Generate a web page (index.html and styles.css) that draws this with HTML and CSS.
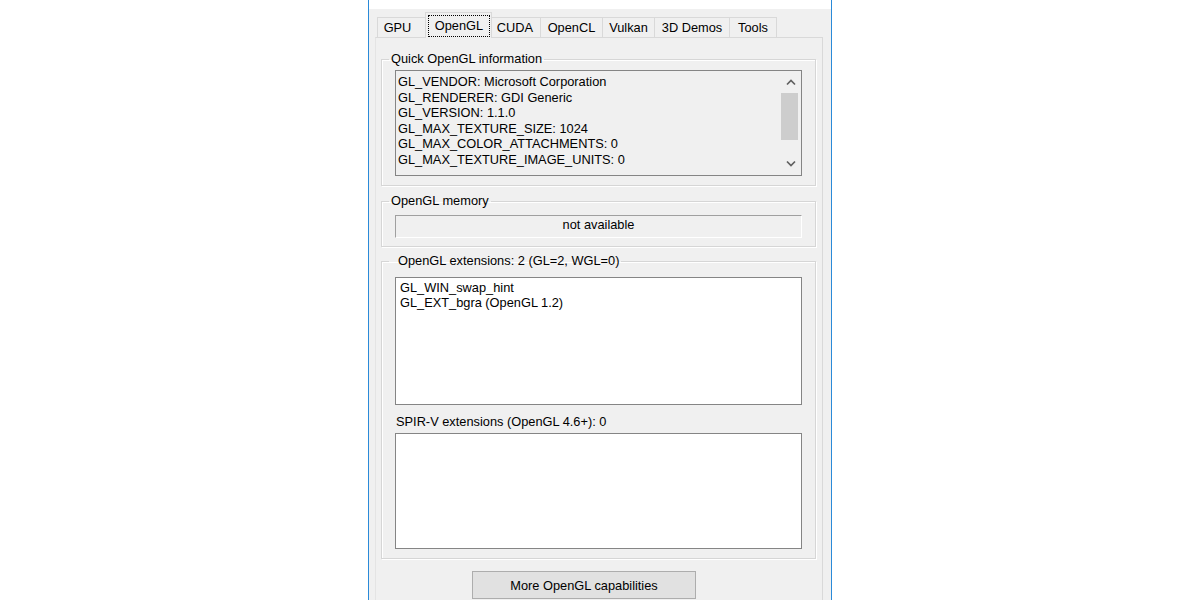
FILE: index.html
```html
<!DOCTYPE html>
<html>
<head>
<meta charset="utf-8">
<title>OpenGL</title>
<link rel="stylesheet" href="styles.css">
</head>
<body>
<div class="window">
  <div class="titlebar"></div>
  <div class="client">
    <div class="tabs">
      <div class="tab tab-gpu">GPU</div>
      <div class="tab tab-opengl active"><span class="focus">OpenGL</span></div>
      <div class="tab tab-cuda">CUDA</div>
      <div class="tab tab-opencl">OpenCL</div>
      <div class="tab tab-vulkan">Vulkan</div>
      <div class="tab tab-demos">3D Demos</div>
      <div class="tab tab-tools">Tools</div>
    </div>
    <div class="panel">
      <fieldset class="group group-quick">
        <legend>Quick OpenGL information</legend>
        <div class="group-body body-quick">
          <div class="listbox list-info">
            <div class="lines lines-info">
              <div>GL_VENDOR: Microsoft Corporation</div>
              <div>GL_RENDERER: GDI Generic</div>
              <div>GL_VERSION: 1.1.0</div>
              <div>GL_MAX_TEXTURE_SIZE: 1024</div>
              <div>GL_MAX_COLOR_ATTACHMENTS: 0</div>
              <div>GL_MAX_TEXTURE_IMAGE_UNITS: 0</div>
            </div>
            <div class="scrollbar">
              <div class="sb-btn"><svg width="12" height="8" viewBox="0 0 12 8"><polyline points="2,6.5 6,2.5 10,6.5" fill="none" stroke="#606060" stroke-width="1.7"/></svg></div>
              <div class="sb-track"><div class="sb-thumb"></div></div>
              <div class="sb-btn"><svg width="12" height="8" viewBox="0 0 12 8"><polyline points="2,1.5 6,5.5 10,1.5" fill="none" stroke="#606060" stroke-width="1.7"/></svg></div>
            </div>
          </div>
        </div>
      </fieldset>
      <fieldset class="group group-mem">
        <legend>OpenGL memory</legend>
        <div class="group-body body-mem">
          <div class="field">not available</div>
        </div>
      </fieldset>
      <fieldset class="group group-ext">
        <legend class="legend-ext">OpenGL extensions: 2 (GL=2, WGL=0)</legend>
        <div class="group-body body-ext">
          <div class="listbox list-ext">
            <div class="lines lines-ext">
              <div>GL_WIN_swap_hint</div>
              <div>GL_EXT_bgra (OpenGL 1.2)</div>
            </div>
          </div>
          <div class="sublabel">SPIR-V extensions (OpenGL 4.6+): 0</div>
          <div class="listbox list-spirv"></div>
        </div>
      </fieldset>
      <button class="btn">More OpenGL capabilities</button>
    </div>
  </div>
</div>
</body>
</html>
```

FILE: styles.css
```css
html, body {
  margin: 0;
  padding: 0;
  background: #ffffff;
}

body {
  font-family: "Liberation Sans", Arial, sans-serif;
  font-size: 12.8px;
  color: #000;
}

.window {
  width: 462px;
  margin: 0 auto;
  border-left: 1px solid #2a8ad8;
  border-right: 1px solid #2a8ad8;
  height: 640px;
  display: flex;
  flex-direction: column;
}

.titlebar {
  height: 9px;
  background: #ffffff;
}

.client {
  flex: 1;
  background: #f0f0f0;
  padding: 3px 8px 0 6px;
  display: flex;
  flex-direction: column;
}

.tabs {
  display: flex;
  align-items: flex-end;
  height: 26px;
  margin-left: 2px;
  margin-bottom: -1px;
  position: relative;
  z-index: 1;
}

.tab {
  box-sizing: border-box;
  height: 20px;
  margin-bottom: 1px;
  margin-left: -1px;
  border: 1px solid #d9d9d9;
  border-bottom: none;
  background: #f0f0f0;
  display: flex;
  align-items: center;
  justify-content: center;
  white-space: nowrap;
  line-height: 16px;
  padding-top: 1px;
}

.tab-gpu { width: 51px; margin-left: 0; padding-right: 10px; }
.tab-opengl { width: 67px; }
.tab-cuda { width: 52px; margin-left: -3px; }
.tab-opencl { width: 63px; }
.tab-vulkan { width: 53px; }
.tab-demos { width: 76px; }
.tab-tools { width: 48px; }

.tab.active {
  height: 26px;
  margin-bottom: 0;
  margin-left: -3px;
  padding: 2px 1px 1px 2px;
  align-items: stretch;
  position: relative;
  z-index: 2;
}

.focus {
  flex: 1;
  border: 1px dotted #000;
  display: flex;
  align-items: center;
  justify-content: center;
  padding-bottom: 1px;
}

.panel {
  flex: 1;
  border: 1px solid #d9d9d9;
  border-left-color: #e4e4e4;
  border-bottom: none;
  display: flex;
  flex-direction: column;
  align-items: flex-start;
}

.group {
  margin: 0 6px 0 5px;
  padding: 0;
  width: 435px;
  box-sizing: border-box;
  border: 1px solid #d6d6d6;
  box-shadow: 1px 1px 0 #ffffff, inset 1px 1px 0 #ffffff;
  min-inline-size: 0;
}

.group legend {
  margin-left: 7px;
  padding: 0 2px;
  line-height: 16px;
  white-space: nowrap;
}

.group legend.legend-ext {
  padding-left: 9px;
}

.group-quick { margin-top: 13px; }
.group-mem { margin-top: 7px; }
.group-ext { margin-top: 6px; }

.group-body {
  padding: 0 13px;
  display: flex;
  flex-direction: column;
}

.body-quick { padding-top: 3px; padding-bottom: 9px; }
.body-mem { padding-top: 6px; padding-bottom: 8px; }
.body-ext { padding-top: 8px; padding-bottom: 9px; }

.listbox {
  box-sizing: border-box;
  width: 407px;
  border: 1px solid #858585;
  background: #ffffff;
  display: flex;
}

.list-info {
  height: 106px;
  background: #f0f0f0;
}

.list-ext { height: 128px; }
.list-spirv { height: 116px; }

.lines {
  flex: 1;
  line-height: 15.6px;
  white-space: nowrap;
  overflow: hidden;
}

.lines-info { padding: 3px 0 0 2px; }
.lines-ext { padding: 1.5px 0 0 4px; }

.scrollbar {
  width: 21px;
  display: flex;
  flex-direction: column;
  background: #f0f0f0;
}

.sb-btn {
  height: 22px;
  display: flex;
  align-items: center;
  justify-content: center;
}

.sb-track {
  flex: 1;
}

.sb-thumb {
  height: 47px;
  margin: 0 3px 0 1px;
  background: #cdcdcd;
}

.field {
  box-sizing: border-box;
  width: 407px;
  height: 23px;
  border-top: 1px solid #a0a0a0;
  border-left: 1px solid #a0a0a0;
  border-right: 1px solid #ffffff;
  border-bottom: 1px solid #ffffff;
  background: #f0f0f0;
  text-align: center;
  line-height: 17px;
}

.sublabel {
  margin: 9px 0 3px 1px;
  line-height: 16px;
  white-space: nowrap;
}

.btn {
  margin: 12px 0 0 96px;
  width: 224px;
  height: 28px;
  box-sizing: border-box;
  border: 1px solid #adadad;
  background: #e1e1e1;
  font-family: "Liberation Sans", Arial, sans-serif;
  font-size: 12.8px;
  color: #000;
  padding: 0;
}
```
